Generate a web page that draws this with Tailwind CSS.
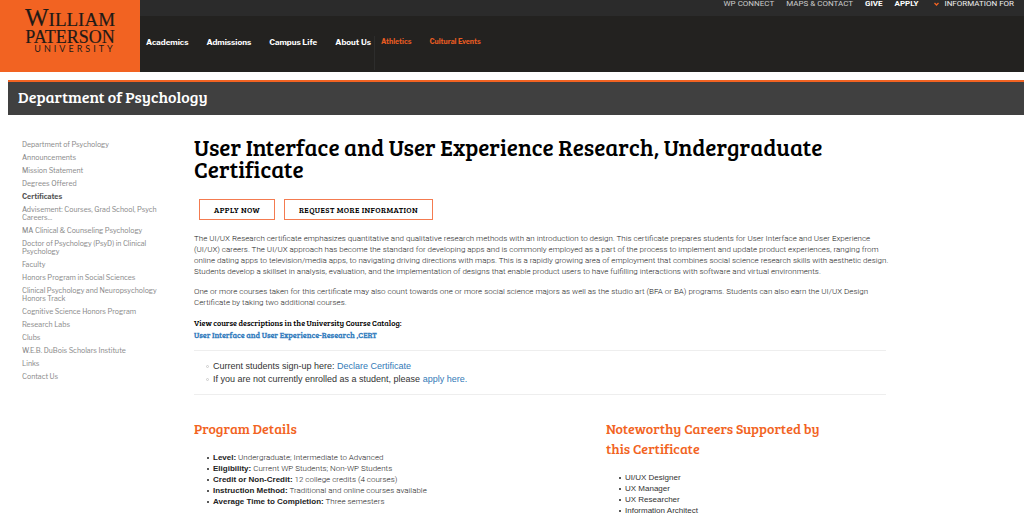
<!DOCTYPE html>
<html lang="en">
<head>
    <meta charset="UTF-8">
    <meta name="viewport" content="width=device-width, initial-scale=1.0">
    <title>User Interface and User Experience Research, Undergraduate Certificate</title>
    <script src="https://cdn.jsdelivr.net/npm/@tailwindcss/browser@4"></script>
</head>
<body class="bg-white font-['Libre_Franklin','Inter',sans-serif] text-[#555] overflow-x-hidden">

    <!-- Header -->
    <header class="flex h-[72px] bg-[#232220]">
        <a href="#" class="block w-[140px] shrink-0 bg-[#f26322]" aria-label="William Paterson University">
            <svg class="w-[140px] h-[72px]" viewBox="0 0 140 72" fill="#1f1a17" font-family="'Liberation Serif', serif" text-anchor="middle">
                <text x="70" y="26" font-size="19" stroke="#1f1a17" stroke-width=".2"><tspan font-size="25">W</tspan>ILLIAM</text>
                <text x="70" y="43" font-size="18" stroke="#1f1a17" stroke-width=".2">PATERSON</text>
                <text x="75" y="52" font-size="9" letter-spacing="3" font-family="Lato, sans-serif">UNIVERSITY</text>
            </svg>
        </a>
        <div class="flex-1 min-w-0">
            <!-- Utility bar -->
            <nav class="flex justify-end items-start h-4 pr-[10px] bg-[#2b2b2b] font-['Roboto',sans-serif] text-[8px] leading-[8px] text-[#ccc] whitespace-nowrap" aria-label="Utility">
                <a href="#" class="mr-3">WP CONNECT</a>
                <a href="#" class="mr-3">MAPS &amp; CONTACT</a>
                <a href="#" class="mr-3 font-bold text-white">GIVE</a>
                <a href="#" class="mr-4 font-bold text-white">APPLY</a>
                <button type="button" class="flex items-center gap-[5px] text-[#eee]">
                    <svg class="w-[5px] h-[4px]" viewBox="0 0 5 4" fill="none" stroke="#f26322" stroke-width="1.3"><path d="M.5 1l2 2 2-2"/></svg>
                    INFORMATION FOR
                </button>
            </nav>
            <!-- Main nav -->
            <nav class="flex items-start h-14 pl-[6px] text-[8px] leading-[12px] font-bold text-white whitespace-nowrap" aria-label="Main">
                <a href="#" class="mt-5 mr-[18px]">Academics</a>
                <a href="#" class="mt-5 mr-[18px]">Admissions</a>
                <a href="#" class="mt-5 mr-[18px]">Campus Life</a>
                <a href="#" class="mt-5 mr-[3px]">About Us</a>
                <div class="flex self-stretch mt-5 mb-[2px] pl-[6px] border-l border-[#2d2d2c] text-[7px] text-[#e85c22]">
                    <a href="#" class="mr-[18px]">Athletics</a>
                    <a href="#">Cultural Events</a>
                </div>
            </nav>
        </div>
    </header>

    <!-- Department title -->
    <div class="mt-2 ml-2 h-[35px] pl-[10px] pb-[3px] flex items-center bg-[#404040] border-t-2 border-[#f26322] text-white font-['Bree_Serif','DejaVu_Serif_Condensed',serif] text-[16px] leading-[20px]">
        Department of Psychology
    </div>

    <div class="flex pl-[22px] pt-[21px]">
        <!-- Section menu -->
        <nav class="w-[140px] shrink-0 mt-[5px] mr-8 text-[7px] leading-[8px] text-[#888]" aria-label="Section">
            <ul class="space-y-[5px]">
                <li><a href="#">Department of Psychology</a></li>
                <li><a href="#">Announcements</a></li>
                <li><a href="#">Mission Statement</a></li>
                <li><a href="#">Degrees Offered</a></li>
                <li><a href="#" class="font-bold text-[#555]">Certificates</a></li>
                <li><a href="#">Advisement: Courses, Grad School, Psych Careers...</a></li>
                <li><a href="#">MA Clinical &amp; Counseling Psychology</a></li>
                <li><a href="#">Doctor of Psychology (PsyD) in Clinical Psychology</a></li>
                <li><a href="#">Faculty</a></li>
                <li><a href="#">Honors Program in Social Sciences</a></li>
                <li><a href="#">Clinical Psychology and Neuropsychology Honors Track</a></li>
                <li><a href="#">Cognitive Science Honors Program</a></li>
                <li><a href="#">Research Labs</a></li>
                <li><a href="#">Clubs</a></li>
                <li><a href="#">W.E.B. DuBois Scholars Institute</a></li>
                <li><a href="#">Links</a></li>
                <li><a href="#">Contact Us</a></li>
            </ul>
        </nav>

        <main class="flex-1 min-w-0 max-w-[692px]">
            <h1 class="font-['Bree_Serif','DejaVu_Serif_Condensed',serif] text-[23px] leading-[22px] text-black">User Interface and User Experience Research, Undergraduate Certificate</h1>

            <div class="flex gap-[9px] mt-[19px] ml-[5px] font-['Bree_Serif','DejaVu_Serif_Condensed',serif] text-[8px] leading-[19px] text-black whitespace-nowrap">
                <button type="button" class="border border-[#f47b50] px-[14px] tracking-wider">APPLY NOW</button>
                <button type="button" class="border border-[#f47b50] px-[14px] tracking-wider">REQUEST MORE INFORMATION</button>
            </div>

            <div class="mt-[13px] -mr-2 space-y-[9px] font-['Roboto',sans-serif] font-light text-[8px] leading-[11px] text-[#222]">
                <p>The UI/UX Research certificate emphasizes quantitative and qualitative research methods with an introduction to design. This certificate prepares students for User Interface and User Experience (UI/UX) careers. The UI/UX approach has become the standard for developing apps and is commonly employed as a part of the process to implement and update product experiences, ranging from online dating apps to television/media apps, to navigating driving directions with maps. This is a rapidly growing area of employment that combines social science research skills with aesthetic design. Students develop a skillset in analysis, evaluation, and the implementation of designs that enable product users to have fulfilling interactions with software and virtual environments.</p>
                <p>One or more courses taken for this certificate may also count towards one or more social science majors as well as the studio art (BFA or BA) programs. Students can also earn the UI/UX Design Certificate by taking two additional courses.</p>
            </div>

            <div class="mt-[9px] font-['Bree_Serif','DejaVu_Serif_Condensed',serif] text-[8px] leading-[12px] text-black">
                <p>View course descriptions in the University Course Catalog:</p>
                <p><a href="#" class="font-bold text-[#3b82bf]">User Interface and User Experience-Research ,CERT</a></p>
            </div>

            <ul class="mt-[9px] pt-[9px] pb-2 border-y border-[#eee] font-['Liberation_Sans',sans-serif] text-[9px] leading-[13px] text-[#333]">
                <li class="flex items-center gap-[4px] pl-[12px]"><span class="size-[3px] rounded-full border border-[#ccc]"></span><span>Current students sign-up here: <a href="#" class="text-[#337ab7]">Declare Certificate</a></span></li>
                <li class="flex items-center gap-[4px] pl-[12px]"><span class="size-[3px] rounded-full border border-[#ccc]"></span><span>If you are not currently enrolled as a student, please <a href="#" class="text-[#337ab7]">apply here.</a></span></li>
            </ul>

            <div class="flex mt-6">
                <section class="w-[412px] shrink-0">
                    <h2 class="font-['Bree_Serif','DejaVu_Serif_Condensed',serif] text-[14px] leading-[20px] text-[#f26322]">Program Details</h2>
                    <ul class="mt-[13px] font-['Roboto',sans-serif] font-light text-[8px] leading-[11px] text-[#222]">
                        <li class="flex items-center gap-[4px] pl-[13px]"><span class="size-[2px] rounded-full bg-[#222]"></span><span><b class="font-['Liberation_Sans',sans-serif] font-bold">Level:</b> Undergraduate; Intermediate to Advanced</span></li>
                        <li class="flex items-center gap-[4px] pl-[13px]"><span class="size-[2px] rounded-full bg-[#222]"></span><span><b class="font-['Liberation_Sans',sans-serif] font-bold">Eligibility:</b> Current WP Students; Non-WP Students</span></li>
                        <li class="flex items-center gap-[4px] pl-[13px]"><span class="size-[2px] rounded-full bg-[#222]"></span><span><b class="font-['Liberation_Sans',sans-serif] font-bold">Credit or Non-Credit:</b> 12 college credits (4 courses)</span></li>
                        <li class="flex items-center gap-[4px] pl-[13px]"><span class="size-[2px] rounded-full bg-[#222]"></span><span><b class="font-['Liberation_Sans',sans-serif] font-bold">Instruction Method:</b> Traditional and online courses available</span></li>
                        <li class="flex items-center gap-[4px] pl-[13px]"><span class="size-[2px] rounded-full bg-[#222]"></span><span><b class="font-['Liberation_Sans',sans-serif] font-bold">Average Time to Completion:</b> Three semesters</span></li>
                    </ul>
                </section>
                <section class="flex-1 max-w-[240px]">
                    <h2 class="font-['Bree_Serif','DejaVu_Serif_Condensed',serif] text-[14px] leading-[20px] text-[#f26322]">Noteworthy Careers Supported by this Certificate</h2>
                    <ul class="mt-[13px] font-['Liberation_Sans',sans-serif] text-[8px] leading-[11px] text-[#333]">
                        <li class="flex items-center gap-[4px] pl-[13px]"><span class="size-[2px] rounded-full bg-[#222]"></span>UI/UX Designer</li>
                        <li class="flex items-center gap-[4px] pl-[13px]"><span class="size-[2px] rounded-full bg-[#222]"></span>UX Manager</li>
                        <li class="flex items-center gap-[4px] pl-[13px]"><span class="size-[2px] rounded-full bg-[#222]"></span>UX Researcher</li>
                        <li class="flex items-center gap-[4px] pl-[13px]"><span class="size-[2px] rounded-full bg-[#222]"></span>Information Architect</li>
                    </ul>
                </section>
            </div>
        </main>
    </div>
</body>
</html>
